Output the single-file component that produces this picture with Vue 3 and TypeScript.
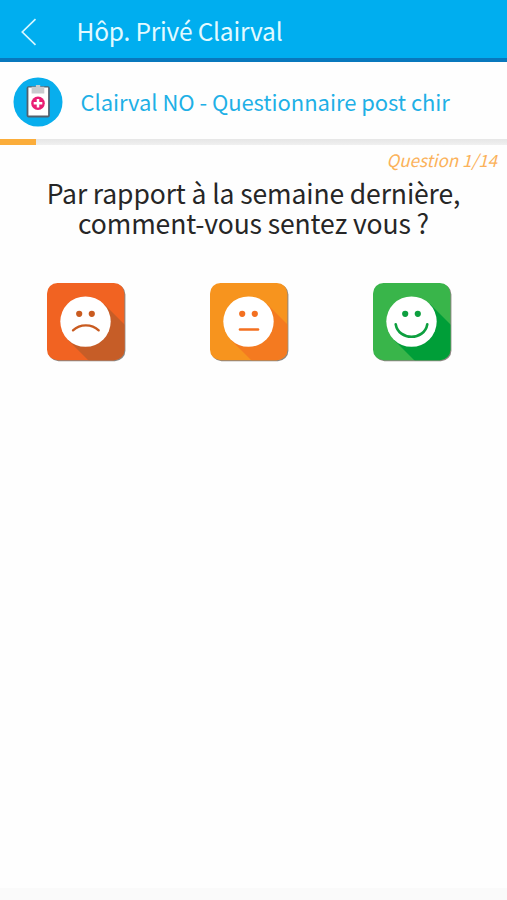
<script setup lang="ts">
type Mood = { id: string; label: string; base: string; shade: string; ink: string; mouth: string; stroke: number }

const current = 1
const total = 14
const progress = `${(current / total) * 100}%`

const moods: Mood[] = [
  { id: 'bad', label: 'Mal', base: '#f16322', shade: '#c65d27', ink: '#c95b20', mouth: 'M26 47.4C33 40.6 44.7 40.6 51.7 47.4', stroke: 2.3 },
  { id: 'neutral', label: 'Moyen', base: '#f7941e', shade: '#f47a20', ink: '#f37021', mouth: 'M30 46.5H48', stroke: 2.6 },
  { id: 'good', label: 'Bien', base: '#39b54a', shade: '#009e38', ink: '#0d9f3f', mouth: 'M22.7 41.2C25.5 58 51.5 58 54.3 41.2', stroke: 2.6 },
]
</script>

<template>
  <main class="screen">
    <header class="topbar">
      <svg class="back" viewBox="0 0 18 28" aria-label="Retour">
        <path d="M15.5 1.2 2.3 14 15.5 26.8" />
      </svg>
      <h1 class="title">Hôp. Privé Clairval</h1>
    </header>

    <section class="survey">
      <svg class="badge" viewBox="0 0 50 50" aria-hidden="true">
        <circle cx="25" cy="25" r="24.5" fill="#08aeed" />
        <rect x="13.6" y="9.2" width="23.2" height="31.2" rx="2" fill="#52606d" />
        <path d="M15.4 10.5H35.1V38.5H15.4Z" fill="#fff" />
        <path d="M18.6 9.7H22.9V7.9H27.2V9.7H31.3V16.4H18.6Z" fill="#c9cbce" />
        <circle cx="25" cy="26.3" r="6.8" fill="#e91e73" />
        <path d="M25 22V30.6M20.7 26.3H29.3" stroke="#fff" stroke-width="2.5" />
      </svg>
      <h2 class="name">Clairval NO - Questionnaire post chir</h2>
    </section>

    <div class="track"><div class="fill" :style="{ width: progress }"></div></div>
    <p class="counter">Question {{ current }}/{{ total }}</p>

    <p class="question">Par rapport à la semaine dernière,<br />comment-vous sentez vous ?</p>

    <div class="moods">
      <button v-for="m in moods" :key="m.id" class="mood" :aria-label="m.label">
        <svg viewBox="0 0 78 78">
          <defs>
            <clipPath :id="`tile-${m.id}`"><rect width="77.4" height="77.2" rx="10.5" /></clipPath>
          </defs>
          <rect x="1" y="1" width="77.4" height="77.2" rx="10.5" fill="#8b8580" />
          <g :clip-path="`url(#tile-${m.id})`">
            <rect width="78" height="78" :fill="m.base" />
            <path d="M57 21 96 60V96H60L21 57Z" :fill="m.shade" />
          </g>
          <circle cx="38.5" cy="38.6" r="25.2" fill="#fff" />
          <circle cx="32.2" cy="30.8" r="3.1" :fill="m.ink" />
          <circle cx="44.8" cy="30.8" r="3.1" :fill="m.ink" />
          <path :d="m.mouth" fill="none" :stroke="m.ink" :stroke-width="m.stroke" stroke-linecap="round" />
        </svg>
      </button>
    </div>

    <footer class="bottom"></footer>
  </main>
</template>

<style>
body {
  margin: 0;
  background: #fefefe;
}
</style>

<style scoped>
.screen {
  display: flex;
  flex-direction: column;
  width: 507px;
  height: 900px;
  overflow: hidden;
  background: #fefefe;
  font-family: "Noto Sans CJK SC", "Noto Sans", sans-serif;
}
.topbar {
  display: flex;
  align-items: center;
  box-sizing: border-box;
  height: 62px;
  flex: none;
  padding: 3px 0 0 20px;
  background: #00aeef;
  border-bottom: 4px solid #0878bd;
}
.back {
  width: 18px;
  height: 28px;
  margin-top: 2px;
  fill: none;
  stroke: #d5f6ff;
  stroke-width: 1.7;
}
.title {
  margin: 1px 0 0 38.5px;
  font-size: 24.5px;
  letter-spacing: -0.2px;
  line-height: 36px;
  font-weight: 400;
  color: #e2faff;
  white-space: nowrap;
}
.survey {
  display: flex;
  align-items: center;
  flex: none;
  height: 77px;
  padding-left: 12.5px;
}
.badge {
  width: 50px;
  height: 50px;
  margin-top: 3px;
}
.name {
  margin: 1px 0 0 18px;
  font-size: 22px;
  letter-spacing: -0.055px;
  line-height: 32px;
  font-weight: 400;
  color: #1eb0e6;
  white-space: nowrap;
}
.track {
  flex: none;
  height: 6px;
  background: linear-gradient(#e6e6e6, #f0f0f0);
}
.fill {
  height: 6px;
  background: #fbad3b;
}
.counter {
  margin: 2px 10px 0 0;
  font-size: 17px;
  line-height: 26px;
  font-style: italic;
  text-align: right;
  color: #fbb25a;
}
.question {
  margin: 5px 0 0;
  font-size: 26.5px;
  letter-spacing: -0.12px;
  line-height: 30px;
  text-align: center;
  color: #262626;
  white-space: nowrap;
}
.moods {
  display: flex;
  justify-content: space-between;
  margin-top: 45px;
  padding: 0 56.4px 0 47.3px;
}
.mood {
  display: block;
  width: 78px;
  height: 78px;
  padding: 0;
  border: 0;
  background: none;
}
.mood svg {
  display: block;
  width: 78px;
  height: 78px;
  overflow: visible;
}
.bottom {
  height: 12px;
  margin-top: auto;
  background: #fafafa;
}
</style>
